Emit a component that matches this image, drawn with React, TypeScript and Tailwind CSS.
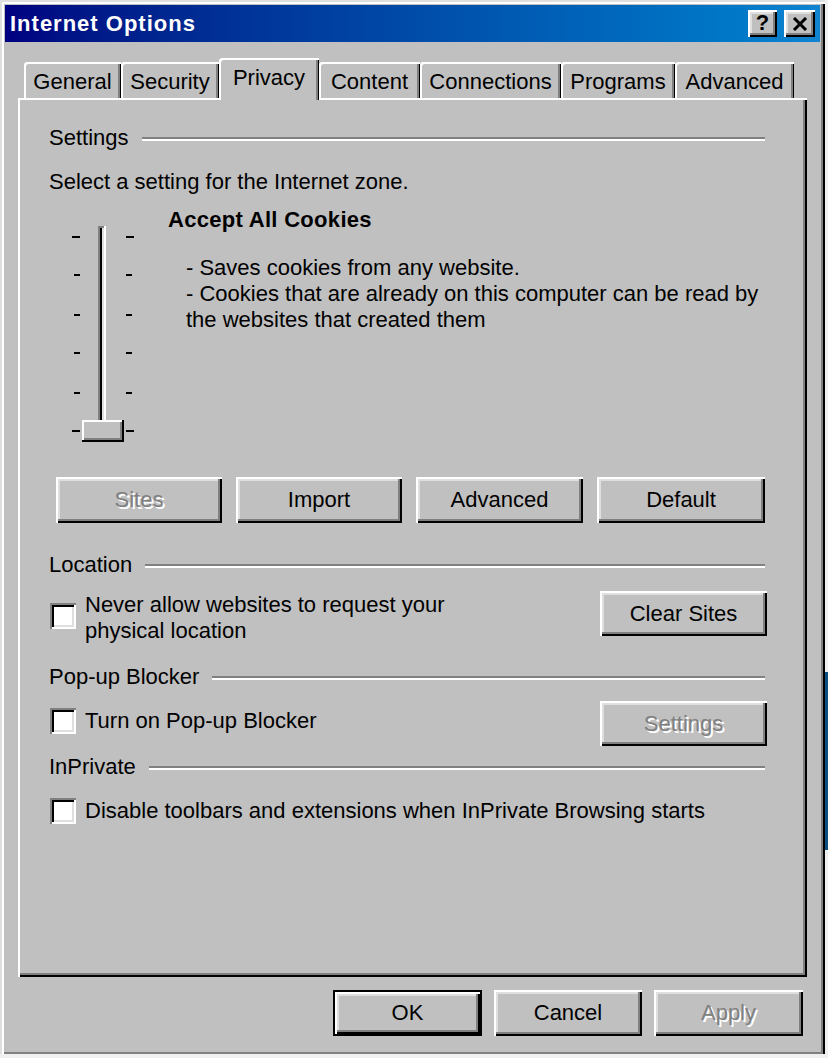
import type { ReactNode } from 'react';

const raised =
  'shadow-[inset_2px_2px_0_#fff,inset_-2px_-2px_0_#000,inset_-4px_-4px_0_#808080,inset_4px_4px_0_#dfdfdf]';
const disabledText = 'text-[#808080] [text-shadow:2px_2px_0_#fff]';

const tabs = [
  { label: 'General', w: 'w-[97px]' },
  { label: 'Security', w: 'w-[98px]' },
  { label: 'Privacy', w: 'w-[100px]', active: true },
  { label: 'Content', w: 'w-[101px]' },
  { label: 'Connections', w: 'w-[141px]' },
  { label: 'Programs', w: 'w-[114px]' },
  { label: 'Advanced', w: 'w-[119px]' },
];

function Button({ children, w, h = 'h-[46px]', disabled }: { children: ReactNode; w: string; h?: string; disabled?: boolean }) {
  return (
    <div className={`${w} ${h} ${raised} bg-[#c0c0c0] flex items-center justify-center ${disabled ? disabledText : 'text-black'}`}>
      {children}
    </div>
  );
}

function GroupHeader({ label }: { label: string }) {
  return (
    <div className="flex items-center gap-[13px] h-[26px] leading-[26px]">
      <span>{label}</span>
      <div className="flex-1 mt-[2px] mr-[2px] h-[4px] border-t-2 border-b-2 border-t-[#808080] border-b-white" />
    </div>
  );
}

function Checkbox() {
  return (
    <div className="w-[26px] h-[26px] shrink-0 bg-white shadow-[inset_2px_2px_0_#808080,inset_-2px_-2px_0_#fff,inset_4px_4px_0_#000,inset_-4px_-4px_0_#dfdfdf]" />
  );
}

function Slider() {
  const ticks = [13, 51, 91, 129, 169, 207];
  return (
    <svg width="62" height="220" viewBox="0 0 62 220">
      {/* track */}
      <rect x="26" y="2" width="2" height="194" fill="#808080" />
      <rect x="28" y="4" width="2" height="192" fill="#000" />
      <rect x="30" y="4" width="2" height="192" fill="#dfdfdf" />
      <rect x="32" y="2" width="2" height="194" fill="#fff" />
      <rect x="26" y="2" width="6" height="2" fill="#808080" />
      {/* ticks */}
      {ticks.map((y, i) => {
        const edge = i === 0 || i === ticks.length - 1;
        return (
          <g key={y}>
            <rect x={edge ? 0 : 2} y={y - 1} width={edge ? 8 : 6} height="2" fill="#000" />
            <rect x="54" y={y - 1} width={edge ? 8 : 6} height="2" fill="#000" />
          </g>
        );
      })}
      {/* thumb */}
      <rect x="10" y="196" width="42" height="22" fill="#c0c0c0" />
      <rect x="10" y="196" width="42" height="2" fill="#fff" />
      <rect x="10" y="196" width="2" height="22" fill="#fff" />
      <rect x="12" y="214" width="38" height="2" fill="#808080" />
      <rect x="48" y="198" width="2" height="18" fill="#808080" />
      <rect x="10" y="216" width="42" height="2" fill="#000" />
      <rect x="50" y="196" width="2" height="22" fill="#000" />
    </svg>
  );
}

export default function App() {
  return (
    <div className="w-[828px] h-[1058px] bg-[#f0f0f0] flex font-[family-name:'Liberation_Sans',Arial,sans-serif] text-[22px] leading-[26px] text-black">
      {/* dialog window */}
      <div className="w-[825px] h-[1054px] bg-[#c0c0c0] flex flex-col pt-[5px] px-[5px] shadow-[inset_2px_2px_0_#dfdfdf,inset_4px_4px_0_#fff,inset_-2px_0_0_#000,inset_-4px_-2px_0_#808080]">
        {/* title bar */}
        <div className="h-[37px] flex items-center bg-gradient-to-r from-[#000080] to-[#1084d0] pl-[5px] pr-[5px]">
          <span className="text-white font-bold tracking-[1px]">Internet Options</span>
          <div className="ml-auto flex gap-[7px]">
            <div className={`w-[29px] h-[27px] bg-[#c0c0c0] ${raised} flex items-center justify-center font-bold text-[22px] pb-[2px]`}>?</div>
            <div className={`w-[31px] h-[27px] bg-[#c0c0c0] ${raised} flex items-center justify-center`}>
              <svg width="16" height="14" viewBox="0 0 16 14">
                <path d="M2 1 L14 13 M14 1 L2 13" stroke="#000" strokeWidth="3" fill="none" />
              </svg>
            </div>
          </div>
        </div>

        <div className="mx-[13px] mt-[16px] flex flex-col">
          {/* tabs */}
          <div className="h-[40px] flex items-end pl-[6px]">
            {tabs.map((t) =>
              t.active ? (
                <div
                  key={t.label}
                  className={`${t.w} h-[42px] -mb-[2px] relative z-10 bg-[#c0c0c0] rounded-tl-[3px] shadow-[inset_2px_2px_0_#fff,inset_-1px_0_0_#000,inset_-3px_0_0_#808080] flex justify-center pt-[7px]`}
                >
                  {t.label}
                </div>
              ) : (
                <div
                  key={t.label}
                  className={`${t.w} h-[36px] bg-[#c0c0c0] rounded-tl-[3px] shadow-[inset_2px_2px_0_#fff,inset_-1px_0_0_#000,inset_-3px_0_0_#808080] flex justify-center pt-[7px]`}
                >
                  {t.label}
                </div>
              )
            )}
          </div>

          {/* tab panel */}
          <div className="h-[879px] bg-[#c0c0c0] shadow-[inset_2px_2px_0_#fff,inset_-2px_-2px_0_#000,inset_-4px_-4px_0_#808080] flex flex-col pl-[31px] pr-[40px] pt-[27px]">
            <GroupHeader label="Settings" />
            <div className="mt-[18px]">Select a setting for the Internet zone.</div>

            <div className="mt-[12px] flex">
              <div className="ml-[23px] pt-[17px]">
                <Slider />
              </div>
              <div className="ml-[34px] flex flex-col">
                <div className="font-bold tracking-[0.3px]">Accept All Cookies</div>
                <div className="ml-[18px] mt-[22px]">
                  <div>- Saves cookies from any website.</div>
                  <div>- Cookies that are already on this computer can be read by</div>
                  <div>the websites that created them</div>
                </div>
              </div>
            </div>

            <div className="mt-[33px] ml-[7px] flex gap-[14px]">
              <Button w="w-[166px]" disabled>Sites</Button>
              <Button w="w-[166px]">Import</Button>
              <Button w="w-[167px]">Advanced</Button>
              <Button w="w-[168px]">Default</Button>
            </div>

            <div className="mt-[29px]">
              <GroupHeader label="Location" />
            </div>
            <div className="mt-[13px] h-[53px] flex items-start">
              <div className="mt-[12px] ml-[1px]">
                <Checkbox />
              </div>
              <div className="ml-[9px] mt-[1px]">
                <div>Never allow websites to request your</div>
                <div>physical location</div>
              </div>
              <div className="ml-auto">
                <Button w="w-[167px]" h="h-[45px]">Clear Sites</Button>
              </div>
            </div>

            <div className="mt-[20px]">
              <GroupHeader label="Pop-up Blocker" />
            </div>
            <div className="mt-[11px] h-[45px] flex items-start">
              <div className="mt-[7px] ml-[1px]">
                <Checkbox />
              </div>
              <div className="ml-[9px] mt-[7px]">Turn on Pop-up Blocker</div>
              <div className="ml-auto">
                <Button w="w-[167px]" h="h-[45px]" disabled>Settings</Button>
              </div>
            </div>

            <div className="mt-[8px]">
              <GroupHeader label="InPrivate" />
            </div>
            <div className="mt-[18px] flex items-start">
              <div className="ml-[1px]">
                <Checkbox />
              </div>
              <div className="ml-[9px]">Disable toolbars and extensions when InPrivate Browsing starts</div>
            </div>
          </div>
        </div>

        {/* dialog buttons */}
        <div className="mt-[13px] flex justify-end gap-[12px] pr-[17px]">
          <div className="w-[149px] h-[46px] border-2 border-black">
            <div className={`w-full h-full bg-[#c0c0c0] ${raised} flex items-center justify-center`}>OK</div>
          </div>
          <Button w="w-[148px]">Cancel</Button>
          <Button w="w-[149px]" disabled>Apply</Button>
        </div>
      </div>

      {/* edge of the window behind */}
      <div className="flex-1 flex flex-col">
        <div className="mt-[672px] h-[178px] bg-[#0b4f80]" />
      </div>
    </div>
  );
}
